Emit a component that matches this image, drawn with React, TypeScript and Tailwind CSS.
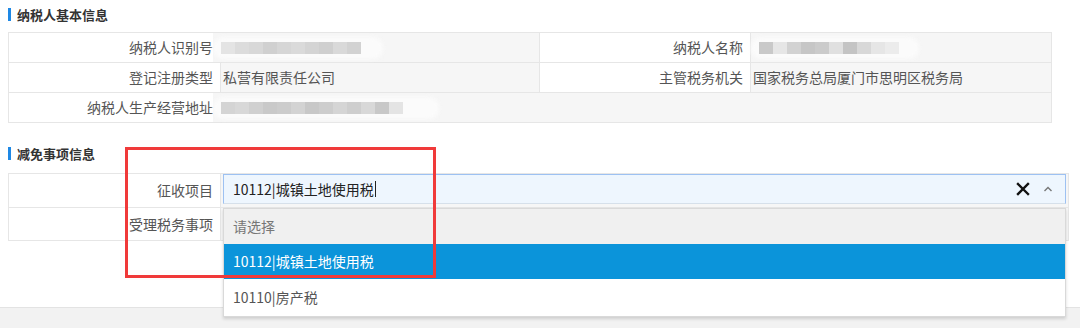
import React from "react";

const font = { fontFamily: '"Noto Sans CJK SC", "Noto Sans", sans-serif' };

function Blur({ width, shades }: { width: number; shades: string[] }) {
  return (
    <div className="relative h-[22px] flex items-center" style={{ width }}>
      <div className="absolute inset-0 rounded-[10px] bg-[#fbfbfb] blur-[2px]" />
      <div className="relative flex h-[12px] pl-[8px] blur-[0.6px]">
        {shades.map((c, i) => (
          <div key={i} className="h-full w-[14px]" style={{ background: c }} />
        ))}
      </div>
    </div>
  );
}

function Title({ text }: { text: string }) {
  return (
    <div className="h-[28px] flex items-center">
      <div className="w-[3px] h-[13px] bg-[#1e88e5]" />
      <span className="ml-[6px] text-[13px] font-bold text-[#333] leading-none">{text}</span>
    </div>
  );
}

const Label = ({ children }: { children?: React.ReactNode }) => (
  <div className="border-r border-b border-[#e6e6e6] bg-white flex items-center justify-end pr-[7px] text-[14px] text-[#555]">
    {children}
  </div>
);

const Value = ({ children, className = "" }: { children?: React.ReactNode; className?: string }) => (
  <div className={`border-r border-b border-[#e6e6e6] bg-[#f6f6f6] flex items-center pl-[2px] text-[14px] text-[#555] ${className}`}>
    {children}
  </div>
);

export default function App() {
  return (
    <div className="relative w-[1080px] h-[328px] overflow-hidden bg-white flex flex-col" style={font}>
      <div className="h-[308px] px-[8px] border-b border-[#e3e3e3]">
        <Title text="纳税人基本信息" />
        <div className="mt-[4px] w-[1044px] grid grid-cols-[212px_319px_211px_1fr] grid-rows-[30px_30px_30px] border-t border-l border-[#e6e6e6]">
          <Label>纳税人识别号</Label>
          <Value className="!pl-0 -ml-[8px] relative">
            <Blur width={170} shades={["#e4e4e4", "#dcdcdc", "#d8d8d8", "#d0d0d0", "#d6d6d6", "#dadada", "#d4d4d4", "#cfcfcf", "#d9d9d9", "#d2d2d2"]} />
          </Value>
          <Label>纳税人名称</Label>
          <Value className="!pl-0">
            <Blur width={168} shades={["#c9c9c9", "#e6e6e6", "#d2d2d2", "#c6c6c6", "#cbcbcb", "#e0e0e0", "#c4c4c4", "#d8d8d8", "#e6e6e6", "#ececec"]} />
          </Value>
          <Label>登记注册类型</Label>
          <Value>私营有限责任公司</Value>
          <Label>主管税务机关</Label>
          <Value>国家税务总局厦门市思明区税务局</Value>
          <Label>纳税人生产经营地址</Label>
          <Value className="col-span-3 !pl-0 -ml-[8px]">
            <Blur width={226} shades={["#d4d4d4", "#d8d8d8", "#d0d0d0", "#c9c9c9", "#cccccc", "#d3d3d3", "#c8c8c8", "#cdcdcd", "#d5d5d5", "#cecece", "#d8d8d8", "#c8c8c8", "#e4e4e4"]} />
          </Value>
        </div>

        <div className="mt-[16px]">
          <Title text="减免事项信息" />
        </div>
        <div className="mt-[6px] w-[1061px] grid grid-cols-[212px_1fr] grid-rows-[34px_33px] border-t border-l border-[#e6e6e6]">
          <Label>征收项目</Label>
          <div className="border-r border-b border-[#e6e6e6] bg-[#f6f6f6] px-[2px] pt-[0px]">
            <div className="relative">
              <div className="h-[30px] bg-[#eef6fe] border border-[#9dc1f2] border-b-[#d6e0ea] flex items-center pl-[9px] pr-[12px]">
                <span className="text-[14px] text-[#222]">10112|城镇土地使用税</span>
                <span className="ml-[1px] w-[1px] h-[16px] bg-[#222]" />
                <div className="flex-1" />
                <svg width="14" height="14" viewBox="0 0 14 14" className="mr-[13px]">
                  <path d="M2 2 L12 12 M12 2 L2 12" stroke="#111" strokeWidth="2.4" strokeLinecap="square" />
                </svg>
                <svg width="10" height="8" viewBox="0 0 10 8">
                  <path d="M1.5 6 L5 2.5 L8.5 6" fill="none" stroke="#777" strokeWidth="1.4" />
                </svg>
              </div>
              <div className="absolute left-0 right-0 top-[34px] z-10 bg-white border border-[#d9d9d9] shadow-[0_2px_3px_rgba(0,0,0,0.15)] text-[14px]">
                <div className="h-[35px] bg-[#f0f0f0] flex items-center pl-[9px] text-[#777]">请选择</div>
                <div className="h-[35px] bg-[#0b94da] flex items-center pl-[9px] text-white">10112|城镇土地使用税</div>
                <div className="h-[37px] bg-white flex items-center pl-[9px] text-[#555]">10110|房产税</div>
              </div>
            </div>
          </div>
          <Label>受理税务事项</Label>
          <div className="border-r border-b border-[#e6e6e6] bg-[#f6f6f6]" />
        </div>
      </div>
      <div className="flex-1 bg-[#f2f2f2]" />
      <div className="absolute left-[125px] top-[147px] w-[311px] h-[131px] border-[3px] border-[#f03a3a] z-20" />
    </div>
  );
}
